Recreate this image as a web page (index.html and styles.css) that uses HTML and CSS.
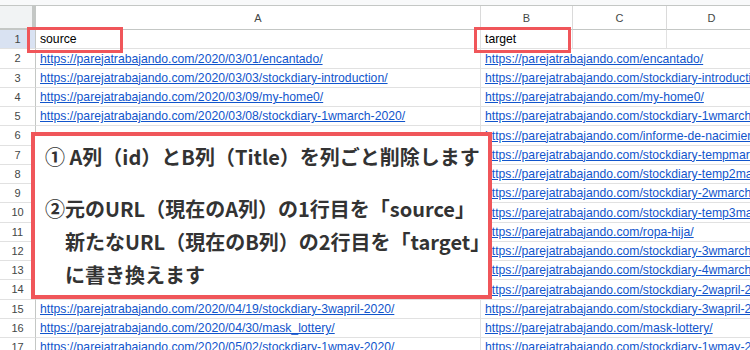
FILE: index.html
```html
<!DOCTYPE html>
<html lang="ja">
<head>
<meta charset="utf-8">
<title>Sheet</title>
<link rel="stylesheet" href="styles.css">
</head>
<body>
<div class="page">
  <div class="topbar"></div>
  <table class="sheet">
    <colgroup>
      <col class="c-rh"><col class="c-a"><col class="c-b"><col class="c-c"><col class="c-d">
    </colgroup>
    <thead>
      <tr class="hdr"><th class="corner"></th><th>A</th><th>B</th><th>C</th><th>D</th></tr>
    </thead>
    <tbody>
      <tr><th class="rh sel">1</th><td>source</td><td>target</td><td></td><td></td></tr>
      <tr><th class="rh">2</th><td><a>https://parejatrabajando.com/2020/03/01/encantado/</a></td><td colspan="3"><a>https://parejatrabajando.com/encantado/</a></td></tr>
      <tr><th class="rh">3</th><td><a>https://parejatrabajando.com/2020/03/03/stockdiary-introduction/</a></td><td colspan="3"><a>https://parejatrabajando.com/stockdiary-introduction/</a></td></tr>
      <tr><th class="rh">4</th><td><a>https://parejatrabajando.com/2020/03/09/my-home0/</a></td><td colspan="3"><a>https://parejatrabajando.com/my-home0/</a></td></tr>
      <tr><th class="rh">5</th><td><a>https://parejatrabajando.com/2020/03/08/stockdiary-1wmarch-2020/</a></td><td colspan="3"><a>https://parejatrabajando.com/stockdiary-1wmarch-2020/</a></td></tr>
      <tr><th class="rh">6</th><td></td><td colspan="3"><a>https://parejatrabajando.com/informe-de-nacimiento/</a></td></tr>
      <tr><th class="rh">7</th><td></td><td colspan="3"><a>https://parejatrabajando.com/stockdiary-tempmarch-2020/</a></td></tr>
      <tr><th class="rh">8</th><td></td><td colspan="3"><a>https://parejatrabajando.com/stockdiary-temp2march-2020/</a></td></tr>
      <tr><th class="rh">9</th><td></td><td colspan="3"><a>https://parejatrabajando.com/stockdiary-2wmarch-2020/</a></td></tr>
      <tr><th class="rh">10</th><td></td><td colspan="3"><a>https://parejatrabajando.com/stockdiary-temp3march-2020/</a></td></tr>
      <tr><th class="rh">11</th><td></td><td colspan="3"><a>https://parejatrabajando.com/ropa-hija/</a></td></tr>
      <tr><th class="rh">12</th><td></td><td colspan="3"><a>https://parejatrabajando.com/stockdiary-3wmarch-2020/</a></td></tr>
      <tr><th class="rh">13</th><td></td><td colspan="3"><a>https://parejatrabajando.com/stockdiary-4wmarch-2020/</a></td></tr>
      <tr><th class="rh">14</th><td></td><td colspan="3"><a>https://parejatrabajando.com/stockdiary-2wapril-2020/</a></td></tr>
      <tr><th class="rh">15</th><td><a>https://parejatrabajando.com/2020/04/19/stockdiary-3wapril-2020/</a></td><td colspan="3"><a>https://parejatrabajando.com/stockdiary-3wapril-2020/</a></td></tr>
      <tr><th class="rh">16</th><td><a>https://parejatrabajando.com/2020/04/30/mask_lottery/</a></td><td colspan="3"><a>https://parejatrabajando.com/mask-lottery/</a></td></tr>
      <tr><th class="rh">17</th><td><a>https://parejatrabajando.com/2020/05/02/stockdiary-1wmay-2020/</a></td><td colspan="3"><a>https://parejatrabajando.com/stockdiary-1wmay-2020/</a></td></tr>
    </tbody>
  </table>

  <div class="mark mark-source"></div>
  <div class="mark mark-target"></div>

  <div class="note">
    <p class="line first">① A列（id）とB列（Title）を列ごと削除します</p>
    <p class="line">②元のURL（現在のA列）の1行目を「source」</p>
    <p class="line indent">新たなURL（現在のB列）の2行目を「target」</p>
    <p class="line indent">に書き換えます</p>
  </div>
</div>
</body>
</html>
```

FILE: styles.css
```css
html, body {
  margin: 0;
  padding: 0;
  background: #ffffff;
}
body {
  width: 750px;
  height: 350px;
  overflow: hidden;
}
.page {
  position: relative;
  width: 750px;
  height: 350px;
  overflow: hidden;
  font-family: "Liberation Sans", Arial, sans-serif;
}
.topbar {
  height: 5px;
  background: #f8f9fa;
  border-bottom: 1px solid #c4c7c5;
}
.sheet {
  table-layout: fixed;
  border-collapse: separate;
  border-spacing: 0;
  width: 757px;
}
.c-rh { width: 36px; }
.c-a { width: 445px; }
.c-b { width: 92px; }
.c-c { width: 94px; }
.c-d { width: 90px; }

.sheet th, .sheet td {
  padding: 0;
  white-space: nowrap;
  overflow: visible;
  border-right: 1px solid #e1e1e1;
  border-bottom: 1px solid #e1e1e1;
}
.hdr th {
  height: 22px;
  font-weight: normal;
  font-size: 11px;
  color: #444746;
  text-align: center;
  vertical-align: middle;
  border-bottom: 1px solid #c4c7c5;
  border-right: 1px solid #dadada;
}
.hdr th.corner {
  background: #f1f3f4;
  border-right: 4px solid #c4c7c5;
  border-bottom: 2px solid #c4c7c5;
}
.sheet tbody tr {
  height: 19.25px;
}
.rh {
  font-weight: normal;
  font-size: 11px;
  color: #444746;
  text-align: center;
  vertical-align: middle;
  background: #ffffff;
  border-right: 1px solid #c4c7c5 !important;
}
.rh.sel {
  background: #d9e2f2;
}
.sheet td {
  font-size: 12.2px;
  color: #000000;
  padding-left: 4px;
  vertical-align: bottom;
  padding-bottom: 2px;
  line-height: 14px;
}
.sheet td a {
  color: #1155cc;
  text-decoration: underline;
}

.mark {
  position: absolute;
  border: 3px solid #f0565a;
  box-sizing: border-box;
  height: 26px;
  top: 27px;
}
.mark-source {
  left: 27px;
  width: 96px;
}
.mark-target {
  left: 474px;
  width: 97px;
}

.note {
  position: absolute;
  left: 31px;
  top: 132px;
  width: 461px;
  height: 167px;
  box-sizing: border-box;
  border: 4px solid #f0565a;
  background: #ffffff;
  padding: 4px 6px 0 10px;
  font-family: "Noto Sans CJK JP", "Noto Sans", sans-serif;
  font-weight: bold;
  font-size: 20px;
  color: #333333;
}
.line {
  margin: 0;
  line-height: 33px;
  white-space: nowrap;
}
.line.first {
  margin-bottom: 19px;
}
.line.indent {
  padding-left: 20px;
}
```
